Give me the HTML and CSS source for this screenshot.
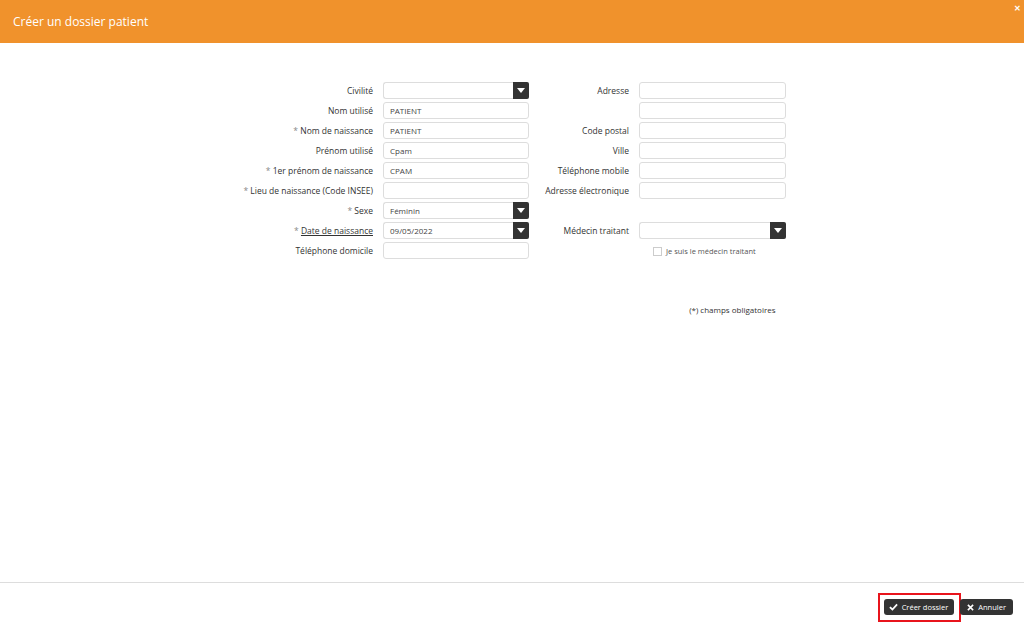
FILE: index.html
```html
<!DOCTYPE html>
<html lang="fr">
<head>
    <meta charset="UTF-8">
    <meta name="viewport" content="width=device-width, initial-scale=1.0">
    <title>Créer un dossier patient</title>
    <link rel="stylesheet" href="styles.css">
</head>
<body>
    <div class="modal-header">
        <h1>Créer un dossier patient</h1>
        <span class="close">&#10005;</span>
    </div>

    <div class="modal-body">
        <div class="form-grid">
            <!-- row 1 -->
            <label>Civilité</label>
            <div class="select"><span></span><i class="caret"></i></div>
            <label>Adresse</label>
            <div class="input"></div>

            <!-- row 2 -->
            <label>Nom utilisé</label>
            <div class="input">PATIENT</div>
            <label></label>
            <div class="input"></div>

            <!-- row 3 -->
            <label><em>*</em> Nom de naissance</label>
            <div class="input">PATIENT</div>
            <label>Code postal</label>
            <div class="input"></div>

            <!-- row 4 -->
            <label>Prénom utilisé</label>
            <div class="input">Cpam</div>
            <label>Ville</label>
            <div class="input"></div>

            <!-- row 5 -->
            <label><em>*</em> 1er prénom de naissance</label>
            <div class="input">CPAM</div>
            <label>Téléphone mobile</label>
            <div class="input"></div>

            <!-- row 6 -->
            <label><em>*</em> Lieu de naissance (Code INSEE)</label>
            <div class="input"></div>
            <label>Adresse électronique</label>
            <div class="input"></div>

            <!-- row 7 -->
            <label><em>*</em> Sexe</label>
            <div class="select"><span>Féminin</span><i class="caret"></i></div>
            <label></label>
            <div></div>

            <!-- row 8 -->
            <label><em>*</em> <u>Date de naissance</u></label>
            <div class="select"><span>09/05/2022</span><i class="caret"></i></div>
            <label>Médecin traitant</label>
            <div class="select"><span></span><i class="caret"></i></div>

            <!-- row 9 -->
            <label>Téléphone domicile</label>
            <div class="input"></div>
            <label></label>
            <div class="check-row"><span class="checkbox"></span>Je suis le médecin traitant</div>
        </div>

        <p class="mandatory">(*) champs obligatoires</p>
    </div>

    <div class="modal-footer">
        <div class="highlight">
            <button class="btn">
                <svg width="9" height="8" viewBox="0 0 10 8"><path d="M1 4.2 L3.8 6.8 L9 1.2" fill="none" stroke="#fff" stroke-width="2"/></svg>
                Créer dossier
            </button>
        </div>
        <button class="btn">
            <svg width="7" height="7" viewBox="0 0 8 8"><path d="M1 1 L7 7 M7 1 L1 7" fill="none" stroke="#fff" stroke-width="1.8"/></svg>
            Annuler
        </button>
    </div>
</body>
</html>
```

FILE: styles.css
```css
html, body {
    margin: 0;
    height: 100%;
}
body {
    font-family: "Open Sans", "Liberation Sans", sans-serif;
    color: #333;
    background: #fff;
    display: flex;
    flex-direction: column;
}
.modal-header {
    height: 43px;
    flex-shrink: 0;
    background: #f0922c;
    color: #fff;
    display: flex;
    align-items: center;
    position: relative;
}
.modal-header h1 {
    margin: 0 0 0 13px;
    font-size: 12px;
    font-weight: normal;
}
.close {
    position: absolute;
    top: 2px;
    right: 3px;
    font-size: 8px;
    font-weight: bold;
}
.modal-body {
    flex: 1;
    padding-top: 39px;
}
.form-grid {
    display: grid;
    grid-template-columns: 133px 146px 90px 147px;
    grid-auto-rows: 17px;
    column-gap: 10px;
    row-gap: 3px;
    justify-content: center;
    padding-left: 2px;
    font-size: 8.5px;
}
.form-grid label {
    text-align: right;
    line-height: 17px;
    white-space: nowrap;
}
.form-grid label em {
    font-style: normal;
    color: #888;
}
.input, .select {
    border: 1px solid #ddd;
    border-radius: 3px;
    box-sizing: border-box;
    height: 17px;
    line-height: 15px;
    padding-left: 6px;
    font-size: 8px;
    color: #444;
}
.select {
    display: flex;
    padding-right: 0;
    border-right: none;
}
.select span {
    flex: 1;
}
.caret {
    width: 16px;
    height: 17px;
    margin-top: -1px;
    background: #333;
    border-radius: 0 2px 2px 0;
    position: relative;
}
.caret::after {
    content: "";
    position: absolute;
    left: 4px;
    top: 6px;
    border-left: 4px solid transparent;
    border-right: 4px solid transparent;
    border-top: 5px solid #fff;
}
.check-row {
    display: flex;
    align-items: center;
    padding-left: 14px;
    font-size: 7.5px;
    color: #555;
    margin-top: 1px;
}
.checkbox {
    width: 7px;
    height: 7px;
    border: 1px solid #ccc;
    margin-right: 4px;
}
.mandatory {
    font-size: 8px;
    width: 547px;
    margin: 45px auto 0;
    text-align: right;
    padding-right: 10px;
    box-sizing: border-box;
}
.modal-footer {
    border-top: 1px solid #ddd;
    height: 41px;
    flex-shrink: 0;
    box-sizing: border-box;
    display: flex;
    justify-content: flex-end;
    align-items: flex-start;
    padding: 10px 11px 0 0;
}
.highlight {
    border: 2px solid #e8141c;
    padding: 4px 5px 5px 4px;
    margin-right: -1px;
}
.highlight .btn {
    padding: 0 6px 0 5px;
}
.modal-footer > .btn {
    margin-top: 6px;
}
.btn {
    font-family: "Open Sans", "Liberation Sans", sans-serif;
    background: #333;
    color: #fff;
    border: none;
    border-radius: 3px;
    height: 16px;
    padding: 0 7px;
    font-size: 7.5px;
    white-space: nowrap;
    display: flex;
    align-items: center;
    gap: 4px;
}
```
